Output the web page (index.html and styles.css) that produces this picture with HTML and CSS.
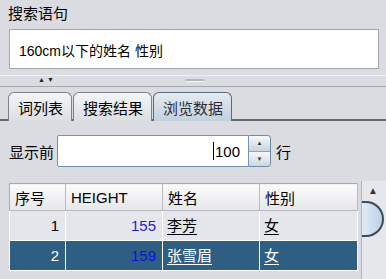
FILE: index.html
```html
<!DOCTYPE html>
<html lang="zh">
<head>
  <meta charset="UTF-8" />
  <title>搜索语句</title>
  <link rel="stylesheet" href="styles.css">
</head>
<body>

  <!-- QUERY -->
  <section class="query">
    <div class="label">搜索语句</div>
    <div class="query-box">160cm以下的姓名 性别</div>
  </section>

  <!-- SPLITTER -->
  <div class="splitter">
    <span class="arrows">▲▼</span>
    <span class="grip"></span>
  </div>

  <!-- TABS -->
  <nav class="tabs">
    <div class="tab">词列表</div>
    <div class="tab">搜索结果</div>
    <div class="tab active">浏览数据</div>
  </nav>

  <!-- BROWSE -->
  <section class="browse">
    <div class="limit-row">
      <span>显示前</span>
      <div class="spin">
        <div class="spin-input"><i class="caret"></i>100</div>
        <div class="spin-btns">
          <span>▲</span>
          <span>▼</span>
        </div>
      </div>
      <span class="unit">行</span>
    </div>

    <div class="table-wrap">
      <table class="grid">
        <thead>
          <tr>
            <th class="c-no">序号</th>
            <th class="c-h">HEIGHT</th>
            <th class="c-name">姓名</th>
            <th class="c-sex">性别</th>
          </tr>
        </thead>
        <tbody>
          <tr>
            <td class="num">1</td>
            <td class="num val">155</td>
            <td><span class="link">李芳</span></td>
            <td><span class="link">女</span></td>
          </tr>
          <tr class="selected">
            <td class="num">2</td>
            <td class="num val">159</td>
            <td><span class="link">张雪眉</span></td>
            <td><span class="link">女</span></td>
          </tr>
        </tbody>
      </table>
      <div class="scrollbar">
        <span class="up">▲</span>
        <span class="thumb"></span>
      </div>
    </div>
  </section>
</body>
</html>
```

FILE: styles.css
```css
/* basics */
*, *::before, *::after {
  box-sizing: border-box;
}
body {
  margin: 0;
  width: 386px;
  height: 279px;
  overflow: hidden;
  background: #dadce2;
  color: #000;
  font-family: "Liberation Sans", "Noto Sans CJK SC", sans-serif;
  font-size: 14px;
}

/* QUERY */
.query .label {
  padding: 2px 0 0 8px;
  height: 29px;
  font-size: 15px;
}
.query-box {
  margin: 0 7px 0 9px;
  height: 40px;
  background: #fff;
  border: 1px solid #a4a6ac;
  padding: 10px 0 0 9px;
  font-size: 14px;
}

/* SPLITTER */
.splitter {
  margin-top: 6px;
  height: 12px;
  border-top: 1px solid #eef0f4;
  border-bottom: 1px solid #a6a8ae;
  position: relative;
}
.splitter .arrows {
  position: absolute;
  left: 38px;
  top: 0;
  font-size: 7px;
  letter-spacing: 2px;
  color: #222;
}
.splitter .grip {
  position: absolute;
  left: 185px;
  top: 3px;
  width: 20px;
  height: 3px;
  border-radius: 2px;
  background: #b4b6bc;
  border-bottom: 1px solid #f4f4f6;
}

/* TABS */
.tabs {
  display: flex;
  padding: 3px 0 0 8px;
  height: 34px;
  border-bottom: 2px solid #5e6874;
}
.tab {
  height: 29px;
  margin-top: 2px;
  padding: 4px 8px 0 9px;
  font-size: 15px;
  background: linear-gradient(#f4f5f7, #dcdee2);
  border: 1px solid #7d8088;
  border-bottom: none;
  border-radius: 6px 6px 0 0;
  margin-right: 1px;
}
.tab.active {
  background: linear-gradient(#e4ebf2, #c2d0de);
  border-color: #5c6a78;
  color: #2a2f36;
}

/* BROWSE */
.browse {
  padding: 14px 0 0 9px;
}
.limit-row {
  display: flex;
  align-items: center;
  gap: 3px;
  height: 32px;
  font-size: 15px;
}
.spin {
  display: flex;
  height: 32px;
}
.spin-input {
  width: 192px;
  height: 32px;
  background: #fff;
  border: 1px solid #6f92b6;
  border-radius: 2px 0 0 2px;
  text-align: right;
  padding: 6px 8px 0 0;
  font-size: 15px;
}
.caret {
  display: inline-block;
  width: 1px;
  height: 18px;
  background: #000;
  vertical-align: -3px;
  margin-right: 1px;
}
.spin-btns {
  width: 22px;
  display: flex;
  flex-direction: column;
  border: 1px solid #6f8aa6;
  border-left: none;
  border-radius: 0 4px 4px 0;
  overflow: hidden;
}
.spin-btns span {
  flex: 1;
  font-size: 6px;
  text-align: center;
  line-height: 15px;
  color: #333;
  background: linear-gradient(#f6f8fa, #c8d4e0);
}
.spin-btns span + span {
  border-top: 1px solid #8ea4ba;
}
.unit {
  margin-left: 2px;
}

.table-wrap {
  display: flex;
  margin-top: 16px;
}
.grid {
  width: 349px;
  border-collapse: collapse;
  border: 1px solid #a8aab0;
  background: #e8e9ee;
  align-self: flex-start;
}
.grid th {
  height: 27px;
  text-align: left;
  font-weight: normal;
  font-size: 15px;
  padding: 0 0 0 5px;
  background: linear-gradient(#fbfbfc, #e6e7ea);
  border-right: 1px solid #b8bac0;
  border-bottom: 1px solid #b8bac0;
}
.grid .c-no { width: 56px; }
.grid .c-h { width: 97px; }
.grid .c-name { width: 97px; }
.grid td {
  height: 30px;
  font-size: 15px;
  padding: 0 5px 0 4px;
  background: #e4e6eb;
  border: 1px solid #fff;
  border-top: none;
}
.grid td.num {
  text-align: right;
  padding-right: 6px;
}
.grid td.val {
  color: #1f1fd0;
}
.grid .link {
  display: inline-block;
  line-height: 17px;
  border-bottom: 1px solid currentColor;
}
.grid tr.selected td {
  background: #2e5f82;
  color: #fff;
}
.grid tr.selected td.val {
  color: #1010e0;
}

.scrollbar {
  margin-left: 3px;
  width: 25px;
  height: 100px;
  margin-top: -2px;
  background: #e6e7ea;
  border-left: 1px solid #b0b2b8;
  position: relative;
}
.scrollbar .up {
  position: absolute;
  left: 6px;
  top: 4px;
  font-size: 10px;
  color: #333;
}
.scrollbar .thumb {
  position: absolute;
  left: 0;
  top: 20px;
  width: 22px;
  height: 36px;
  border: 2px solid #3d4a58;
  border-left: none;
  border-radius: 0 20px 20px 0;
  background: linear-gradient(90deg, #e2ecf6, #bcd0e4);
}
```
